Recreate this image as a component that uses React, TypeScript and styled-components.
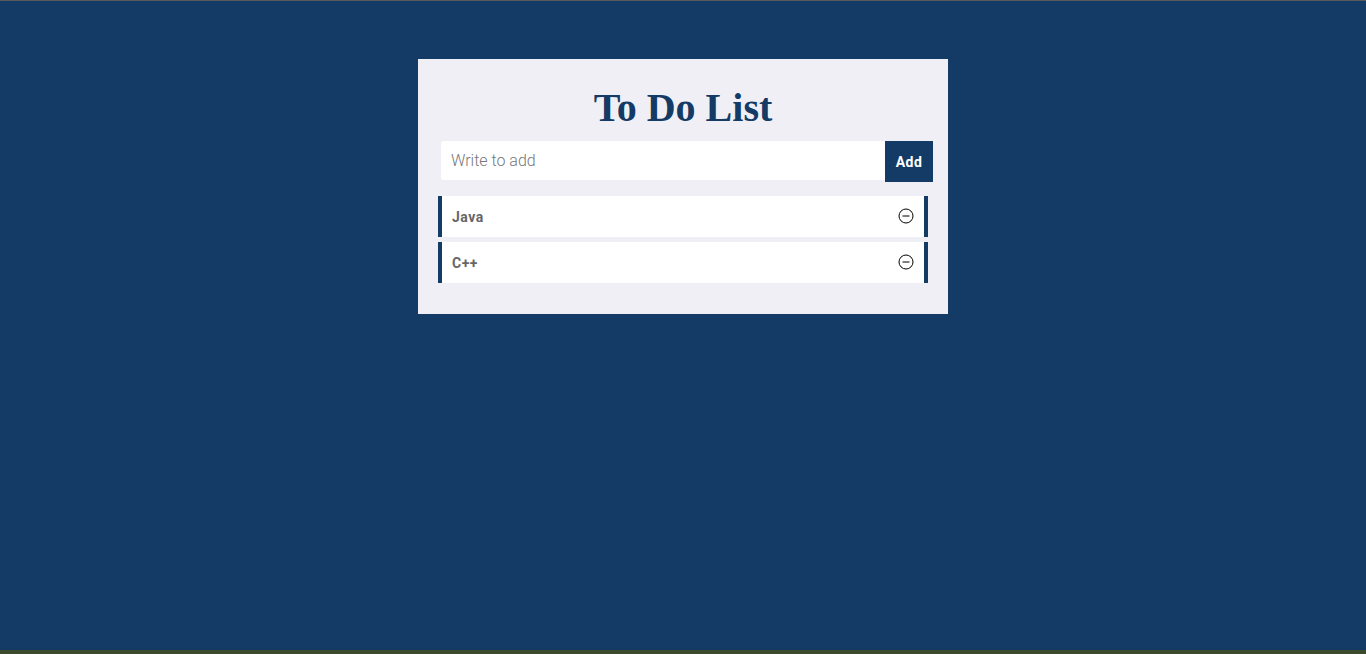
import React, { useState } from "react";
import styled, { createGlobalStyle } from "styled-components";

const Global = createGlobalStyle`
  html, body { margin: 0; padding: 0; }
  body {
    background: #133b65;
    height: 654px;
    font-family: Roboto, "Liberation Sans", sans-serif;
    border-top: 1px solid #5a5a5a;
    border-bottom: 4px solid #3e4a2c;
    box-sizing: border-box;
    overflow: hidden;
  }
`;

const Page = styled.div`
  display: flex;
  justify-content: center;
  padding-top: 58px;
`;

const Card = styled.div`
  width: 530px;
  background: #f1eff6;
  box-sizing: border-box;
  padding: 24px 20px 31px 20px;
  display: flex;
  flex-direction: column;
`;

const Title = styled.h1`
  margin: 0;
  text-align: center;
  font-family: "Liberation Serif", "Times New Roman", serif;
  font-weight: bold;
  font-size: 40px;
  line-height: 50px;
  color: #133b65;
`;

const Form = styled.div`
  display: flex;
  align-items: flex-start;
  margin: 8px -5px 14px 3px;
`;

const Input = styled.input`
  flex: 1;
  height: 39px;
  border: none;
  border-radius: 3px 0 0 3px;
  background: #fff;
  padding: 0 10px;
  font-family: Roboto, "Liberation Sans", sans-serif;
  font-size: 16px;
  font-weight: 300;
  color: #333;
  outline: none;
  &::placeholder { color: #777; }
`;

const AddButton = styled.button`
  width: 48px;
  height: 41px;
  border: none;
  background: #133b65;
  color: #fff;
  font-family: Roboto, sans-serif;
  font-weight: bold;
  font-size: 14px;
  letter-spacing: 0.5px;
  padding: 0;
  cursor: pointer;
`;

const List = styled.ul`
  list-style: none;
  margin: 0;
  padding: 0;
  display: flex;
  flex-direction: column;
  gap: 5px;
`;

const Item = styled.li`
  height: 41px;
  background: #fff;
  border-left: 4px solid #133b65;
  border-right: 4px solid #133b65;
  display: flex;
  align-items: center;
  justify-content: space-between;
  padding: 0 10px 0 10px;
  box-sizing: border-box;
`;

const ItemText = styled.span`
  font-family: Roboto, sans-serif;
  font-weight: bold;
  font-size: 14px;
  letter-spacing: 0.5px;
  color: #666;
  margin-top: 1px;
`;

const Remove = styled.button`
  border: none;
  background: none;
  padding: 0;
  width: 16px;
  height: 16px;
  display: flex;
  cursor: pointer;
  margin-top: -2px;
`;

const MinusIcon = () => (
  <svg width="16" height="16" viewBox="0 0 16 16" fill="none" stroke="#000" strokeWidth="1">
    <circle cx="8" cy="8" r="7" />
    <line x1="4.5" y1="8" x2="11.5" y2="8" />
  </svg>
);

export default function App() {
  const [items, setItems] = useState<string[]>(["Java", "C++"]);
  const [text, setText] = useState("");
  const add = () => {
    if (text.trim()) {
      setItems([...items, text.trim()]);
      setText("");
    }
  };
  return (
    <>
      <Global />
      <Page>
        <Card>
          <Title>To Do List</Title>
          <Form>
            <Input
              placeholder="Write to add"
              value={text}
              onChange={(e) => setText(e.target.value)}
            />
            <AddButton onClick={add}>Add</AddButton>
          </Form>
          <List>
            {items.map((it, i) => (
              <Item key={i}>
                <ItemText>{it}</ItemText>
                <Remove onClick={() => setItems(items.filter((_, j) => j !== i))}>
                  <MinusIcon />
                </Remove>
              </Item>
            ))}
          </List>
        </Card>
      </Page>
    </>
  );
}
